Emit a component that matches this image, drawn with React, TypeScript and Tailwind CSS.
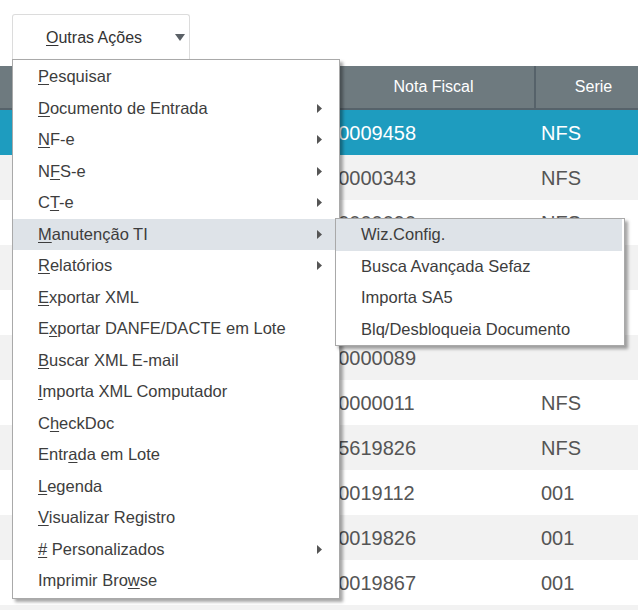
import React from 'react';

type MenuItem = { label: string; u: number; sub?: boolean; active?: boolean };

const items: MenuItem[] = [
  { label: 'Pesquisar', u: 0 },
  { label: 'Documento de Entrada', u: 0, sub: true },
  { label: 'NF-e', u: 0, sub: true },
  { label: 'NFS-e', u: 1, sub: true },
  { label: 'CT-e', u: 1, sub: true },
  { label: 'Manutenção TI', u: 0, sub: true, active: true },
  { label: 'Relatórios', u: 0, sub: true },
  { label: 'Exportar XML', u: 0 },
  { label: 'Exportar DANFE/DACTE em Lote', u: 1 },
  { label: 'Buscar XML E-mail', u: 0 },
  { label: 'Importa XML Computador', u: 0 },
  { label: 'CheckDoc', u: 1 },
  { label: 'Entrada em Lote', u: 4 },
  { label: 'Legenda', u: 0 },
  { label: 'Visualizar Registro', u: 0 },
  { label: '# Personalizados', u: 0, sub: true },
  { label: 'Imprimir Browse', u: 12 },
];

const subItems = ['Wiz.Config.', 'Busca Avançada Sefaz', 'Importa SA5', 'Blq/Desbloqueia Documento'];

// linhas 4 e 5 ficam totalmente atrás do submenu
const rows = [
  { nota: '000009458', serie: 'NFS' },
  { nota: '000000343', serie: 'NFS' },
  { nota: '000000090', serie: 'NFS' },
  { nota: '', serie: '' },
  { nota: '', serie: '' },
  { nota: '000000089', serie: '' },
  { nota: '000000011', serie: 'NFS' },
  { nota: '005619826', serie: 'NFS' },
  { nota: '000019112', serie: '001' },
  { nota: '000019826', serie: '001' },
  { nota: '000019867', serie: '001' },
  { nota: '', serie: '' },
];

const Accel: React.FC<{ text: string; u: number }> = ({ text, u }) => (
  <span>
    {text.slice(0, u)}
    <span className="underline underline-offset-[2px]">{text.charAt(u)}</span>
    {text.slice(u + 1)}
  </span>
);

const Arrow = () => (
  <svg width="5" height="9" viewBox="0 0 5 9" className="absolute right-[17px] top-[11px]">
    <path d="M0 0 L5 4.5 L0 9 Z" fill="#555" />
  </svg>
);

export default function App() {
  return (
    <div className="relative w-[638px] h-[610px] overflow-hidden bg-white font-['Liberation_Sans',Arial,sans-serif]">
      {/* Barra superior */}
      <div className="h-[66px] pl-[12px] pt-[14px]">
        <div className="relative w-[178px] h-[46px] border border-b-0 border-[#dcdcdc] rounded-t-[3px] bg-white text-[16px] text-[#333]">
          <span className="absolute left-[33px] top-[11px]">
            <Accel text="Outras Ações" u={0} />
          </span>
          <svg width="10" height="7" viewBox="0 0 10 7" className="absolute left-[162px] top-[19px]">
            <path d="M0 0 L10 0 L5 7 Z" fill="#5a6066" />
          </svg>
        </div>
      </div>

      {/* Tabela */}
      <div className="w-[651px]">
        <div className="grid grid-cols-[339px_197px_115px] h-[44px] bg-[#6e7a7f] border-b-2 border-[#56626a] text-white text-[16px]">
          <div className="border-r border-[#56626a]" />
          <div className="flex items-center justify-center pr-[6px] border-r-2 border-[#56626a]">Nota Fiscal</div>
          <div className="flex items-center justify-center">Serie</div>
        </div>
        {rows.map((r, i) => (
          <div
            key={i}
            className={`grid grid-cols-[339px_197px_115px] h-[45px] items-center text-[20px] ${
              i === 0 ? 'bg-[#1e9cbf] text-white' : i % 2 === 1 ? 'bg-[#f2f2f2] text-[#555]' : 'bg-white text-[#555]'
            }`}
          >
            <div />
            <div className="-ml-[23px]">{r.nota}</div>
            <div className="pl-[5px]">{r.serie}</div>
          </div>
        ))}
      </div>

      {/* Menu Outras Ações */}
      <div className="absolute left-[12px] top-[59px] w-[328px] bg-white border border-[#a9a9a9] shadow-[3px_3px_3px_rgba(0,0,0,0.35)] py-[1px] text-[16.5px] text-[#3d3d3d]">
        {items.map((it) => (
          <div
            key={it.label}
            className={`relative h-[31.5px] pl-[25px] flex items-center ${it.active ? 'bg-[#dee3e8]' : ''}`}
          >
            <Accel text={it.label} u={it.u} />
            {it.sub && <Arrow />}
          </div>
        ))}
      </div>

      {/* Submenu Manutenção TI */}
      <div className="absolute left-[335px] top-[218px] w-[290px] bg-white border border-[#a9a9a9] shadow-[3px_3px_3px_rgba(0,0,0,0.35)] pr-[2px] text-[16.5px] text-[#3d3d3d]">
        {subItems.map((s, i) => (
          <div key={s} className={`h-[31.5px] pl-[25px] flex items-center ${i === 0 ? 'bg-[#dee3e8]' : ''}`}>
            {s}
          </div>
        ))}
      </div>
    </div>
  );
}
